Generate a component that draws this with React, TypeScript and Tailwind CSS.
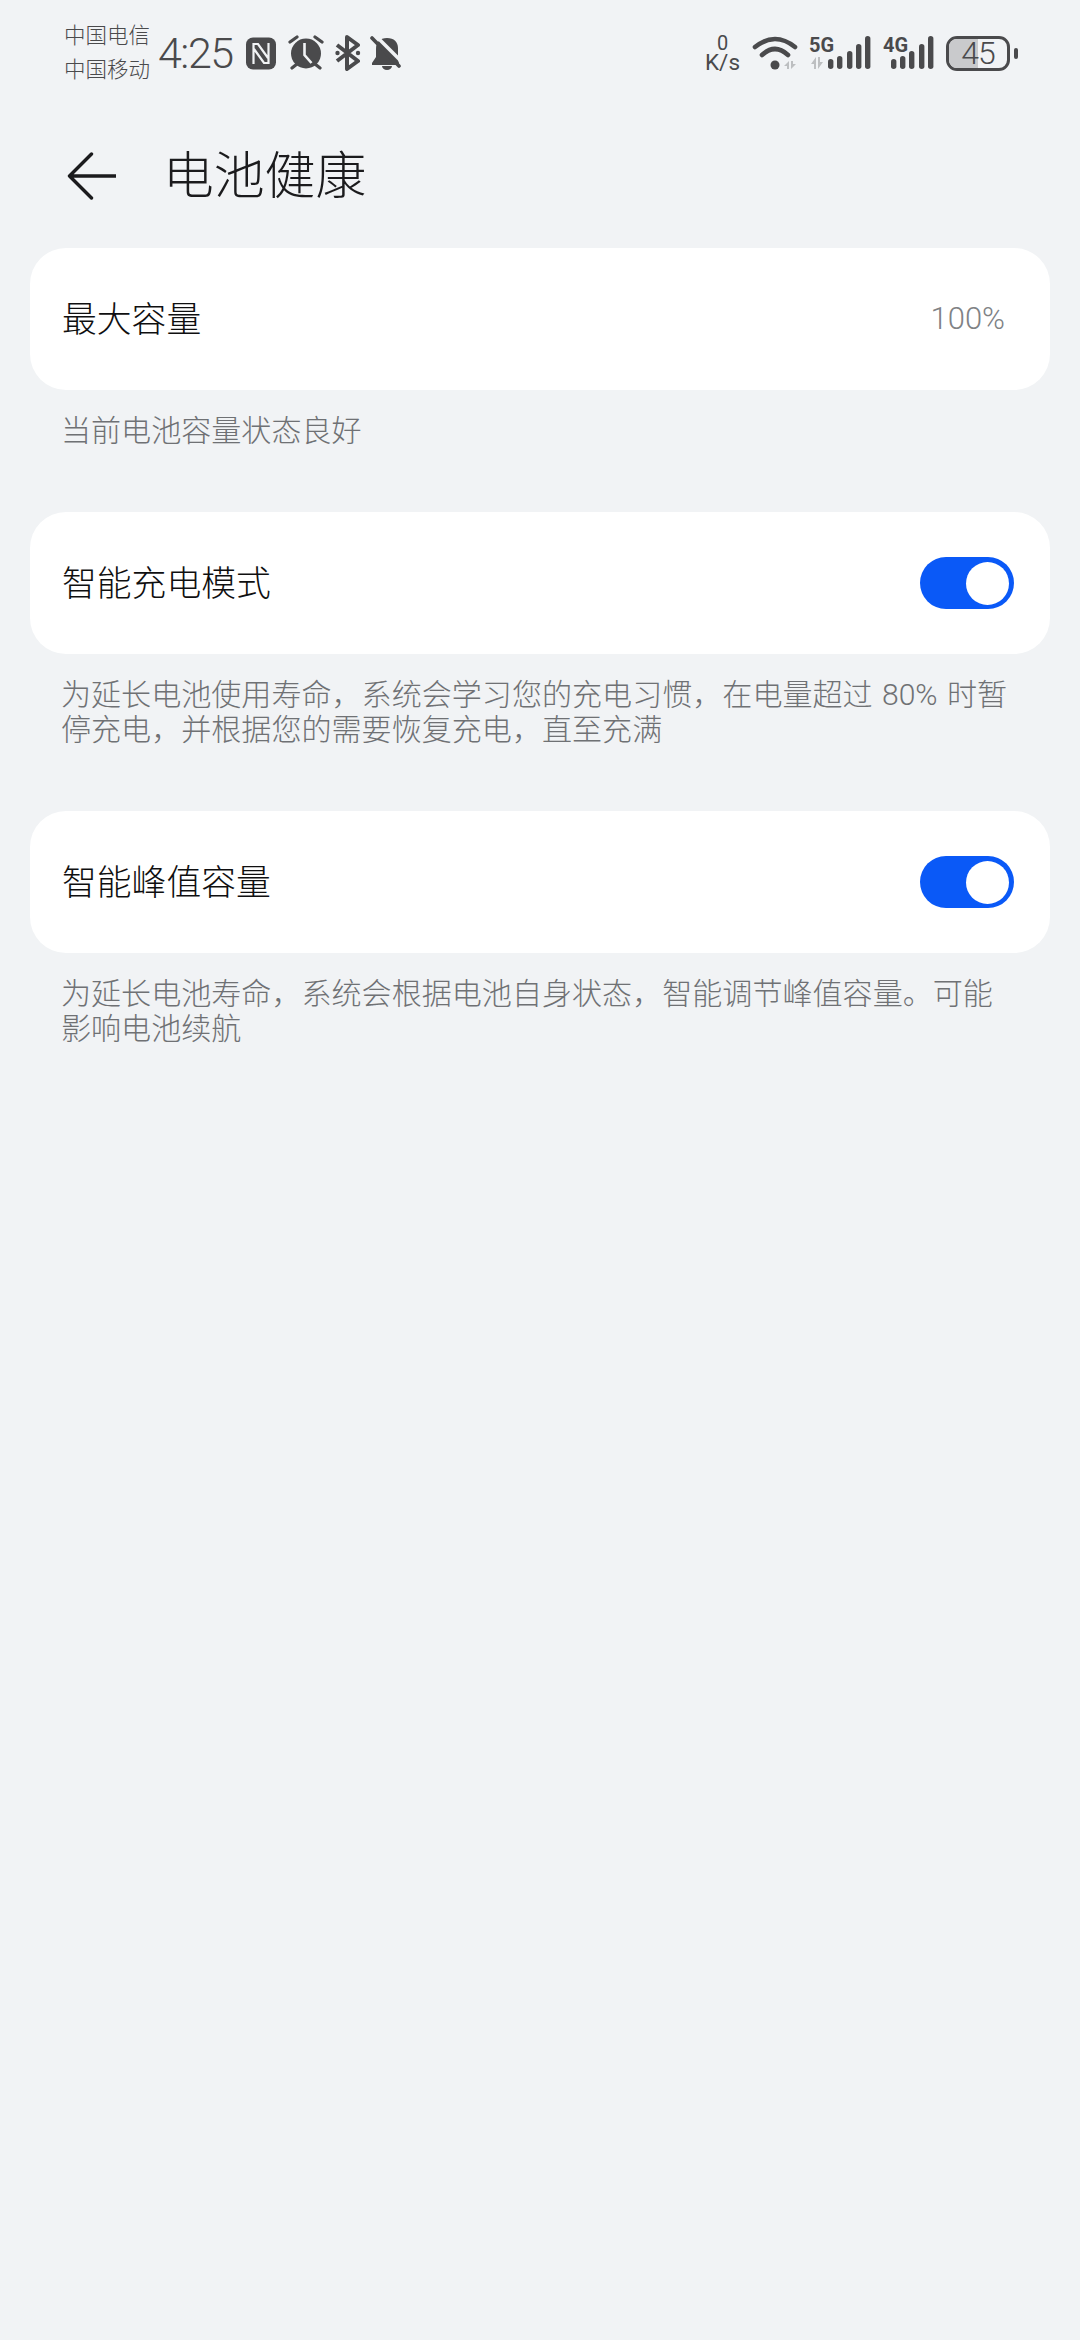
const ink = "#4a4a4c";
const faint = "#bdbfc1";

function NfcIcon() {
  return (
    <svg width="32" height="33" viewBox="0 0 32 33">
      <rect x="1" y="0.5" width="30" height="32" rx="7" fill={ink} />
      <path d="M8.5 27V7H13L23 21M23.5 6V26H19L9 12" fill="none" stroke="#f1f3f5" strokeWidth="2.2" />
    </svg>
  );
}

function AlarmIcon() {
  return (
    <svg width="36" height="36" viewBox="0 0 36 36">
      <circle cx="18" cy="18.5" r="15" fill={ink} />
      <path d="M16.5 8v12l7 8" fill="none" stroke="#f1f3f5" strokeWidth="2.6" />
      <path d="M2 7l7-5M27 2l7 5M4 33l5-4M32 33l-5-4" fill="none" stroke={ink} strokeWidth="3.2" strokeLinecap="round" />
    </svg>
  );
}

function BluetoothIcon() {
  return (
    <svg width="26" height="36" viewBox="0 0 26 36">
      <path d="M2 10l21 16-11 8V2l11 8L2 26" fill="none" stroke={ink} strokeWidth="4" strokeLinejoin="round" />
      <circle cx="2.5" cy="18" r="2.2" fill={ink} />
      <circle cx="23" cy="18" r="2.2" fill={ink} />
    </svg>
  );
}

function BellOffIcon() {
  return (
    <svg width="32" height="36" viewBox="0 0 32 36">
      <path d="M17 3C10 3 6 7 6 14v8l-4 6v2h27v-2l-1-3V13C28 7 24 3 17 3z" fill={ink} />
      <path d="M12 31h10a5 4 0 0 1-10 0z" fill={ink} />
      <path d="M5 0L33 28" stroke="#f1f3f5" strokeWidth="3.5" />
      <path d="M2 3L29 31" stroke={ink} strokeWidth="3.6" strokeLinecap="round" />
    </svg>
  );
}

function WifiIcon() {
  return (
    <svg width="46" height="36" viewBox="0 0 46 36">
      <path d="M3 12Q23-4 43 12M10 20Q23 8 36 20" fill="none" stroke={ink} strokeWidth="4.6" strokeLinecap="round" />
      <circle cx="23" cy="30" r="4.5" fill={ink} />
      <path d="M37 26L32 31H35V34H37zM39 34L44 29H41V26H39z" fill={faint} />
    </svg>
  );
}

function Bars({ xs }: { xs: number[] }) {
  const tops = [24, 21, 16, 9, 1];
  return (
    <>
      {xs.map((x, i) => (
        <rect key={x} x={x} y={tops[i]} width="5.4" height={34 - tops[i]} rx="2.7" fill={ink} />
      ))}
    </>
  );
}

function SignalLabel({ children }: { children: string }) {
  return (
    <text x="1" y="17" fontSize="20" fontWeight="700" fill={ink} fontFamily="Roboto, sans-serif">
      {children}
    </text>
  );
}

function Signal5G() {
  return (
    <svg width="64" height="36" viewBox="0 0 64 36" className="overflow-visible">
      <SignalLabel>5G</SignalLabel>
      <path d="M8 22L3 29H6V34H8zM10 34L15 27H12V22H10z" fill={faint} />
      <Bars xs={[20, 29, 39, 48, 57]} />
    </svg>
  );
}

function Signal4G() {
  return (
    <svg width="52" height="36" viewBox="0 0 52 36" className="overflow-visible">
      <SignalLabel>4G</SignalLabel>
      <Bars xs={[9, 18, 27, 37, 46]} />
    </svg>
  );
}

function Battery() {
  return (
    <div className="flex items-center">
      <div className="relative h-[35px] w-[64px] overflow-hidden rounded-[11px] border-[3px] border-[#4a4a4c]">
        <div className="h-full w-[29px] bg-[#c9cacc]" />
        <div className="absolute inset-0 flex items-center justify-center text-[32px] font-light leading-none tracking-[-1px]">
          45
        </div>
      </div>
      <div className="ml-[4px] h-[11px] w-[4px] rounded-full bg-[#4a4a4c]" />
    </div>
  );
}

function StatusBar() {
  return (
    <div className="flex h-[106px] items-center pl-[64px] pr-[62px] text-[#4a4a4c]">
      <div className="w-[88px] text-[21.5px] leading-[34px] font-light">
        <div>中国电信</div>
        <div>中国移动</div>
      </div>
      <div className="ml-[6px] w-[80px] text-[43px] font-light leading-none tracking-[-1.5px]">4:25</div>
      <div className="ml-[7px] flex items-center">
        <NfcIcon />
        <div className="ml-[11px]">
          <AlarmIcon />
        </div>
        <div className="ml-[11px]">
          <BluetoothIcon />
        </div>
        <div className="ml-[9px]">
          <BellOffIcon />
        </div>
      </div>
      <div className="ml-auto flex items-center">
        <div className="ml-[1px] w-[35px] text-center">
          <div className="text-[20px] leading-[17px]">0</div>
          <div className="text-[22.5px] leading-[20px]">K/s</div>
        </div>
        <div className="ml-[12px]">
          <WifiIcon />
        </div>
        <div className="ml-[10px]">
          <Signal5G />
        </div>
        <div className="ml-[10px]">
          <Signal4G />
        </div>
        <div className="ml-[12px]">
          <Battery />
        </div>
      </div>
    </div>
  );
}

function Toggle() {
  return (
    <div className="flex h-[52px] w-[94px] items-center justify-end rounded-full bg-[#0a59f7] pr-[5px]">
      <div className="h-[43px] w-[43px] rounded-full bg-white" />
    </div>
  );
}

function Section({
  title,
  note,
  value,
  toggle,
}: {
  title: string;
  note: string;
  value?: string;
  toggle?: boolean;
}) {
  return (
    <section>
      <div className="mx-[30px] flex h-[142px] items-center justify-between rounded-[36px] bg-white pl-[32px] pr-[36px]">
        <span className="pt-[2px] text-[34.8px] font-light text-[#0f0f10]">{title}</span>
        {value && <span className="pr-[9px] text-[31px] font-light text-[#808285]">{value}</span>}
        {toggle && <Toggle />}
      </div>
      <p className="mt-[23px] px-[61px] text-[30.07px] leading-[35px] font-light text-[#6f7174] [word-spacing:2px]">
        {note}
      </p>
    </section>
  );
}

export default function App() {
  return (
    <div className="h-[2340px] w-[1080px] overflow-hidden bg-[#f1f3f5] font-['Roboto','Noto_Sans_CJK_SC',sans-serif]">
      <StatusBar />
      <div className="flex h-[142px] items-start pl-[66px] pt-[45px]">
        <svg width="50" height="50" viewBox="0 0 50 50">
          <path d="M48 25H2M24 3L2 25l22 22" fill="none" stroke="#1b1b1d" strokeWidth="3.4" strokeLinecap="round" strokeLinejoin="round" transform="translate(1.5 0)" />
        </svg>
        <h1 className="ml-[47px] pt-[1px] text-[50.8px] leading-[50px] font-light text-[#1b1b1d]">电池健康</h1>
      </div>
      <div className="flex flex-col gap-[64px]">
        <Section title="最大容量" value="100%" note="当前电池容量状态良好" />
        <Section
          title="智能充电模式"
          toggle
          note="为延长电池使用寿命，系统会学习您的充电习惯，在电量超过 80% 时暂停充电，并根据您的需要恢复充电，直至充满"
        />
        <Section
          title="智能峰值容量"
          toggle
          note="为延长电池寿命，系统会根据电池自身状态，智能调节峰值容量。可能影响电池续航"
        />
      </div>
    </div>
  );
}
